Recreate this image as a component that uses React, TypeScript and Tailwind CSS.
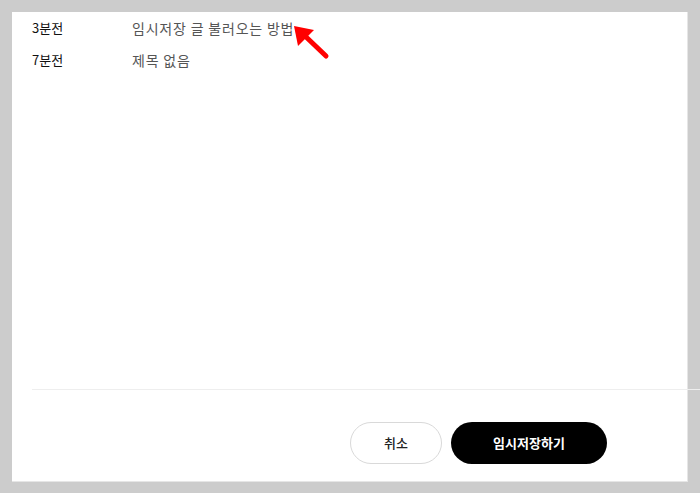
import React from "react";

export default function App() {
  const font = { fontFamily: '"Noto Sans CJK KR", "Noto Sans", sans-serif' };
  return (
    <div className="w-[700px] h-[493px] bg-[#cccccc] pt-[12px] pl-[12px] overflow-hidden" style={font}>
      <div className="relative w-[676px] h-[470px] bg-white border-r border-b border-[#e6e6e6] flex flex-col">
        <div className="flex-1 pl-[20px] pt-[6px]">
          <div className="flex items-center h-[20px] text-[13px]">
            <span className="w-[100px] text-[#111] font-normal">3분전</span>
            <span className="text-[#555] text-[14px] tracking-[0.8px]">임시저장 글 불러오는 방법</span>
          </div>
          <div className="flex items-center h-[20px] mt-[12px] text-[13px]">
            <span className="w-[100px] text-[#111] font-normal">7분전</span>
            <span className="text-[#555] text-[14px] tracking-[0.8px]">제목 없음</span>
          </div>
        </div>
        <div className="ml-[20px] mr-[-14px] h-px bg-[#eeeeee]" />
        <div className="h-[91px] flex items-start justify-end pr-[80px] pt-[32px] gap-[9px]">
          <button className="w-[92px] h-[42px] rounded-full border border-[#d9d9d9] bg-white text-[13px] text-[#222] font-medium">
            취소
          </button>
          <button className="w-[156px] h-[42px] rounded-full bg-black text-white text-[13px] font-bold">
            임시저장하기
          </button>
        </div>
        <svg className="absolute left-[282px] top-[14px]" width="36" height="36" viewBox="0 0 36 36">
          <line x1="32" y1="30" x2="10" y2="9" stroke="#ff0000" strokeWidth="5" strokeLinecap="round" />
          <polygon points="0,0 20,4 4,20" fill="#ff0000" />
        </svg>
      </div>
    </div>
  );
}
